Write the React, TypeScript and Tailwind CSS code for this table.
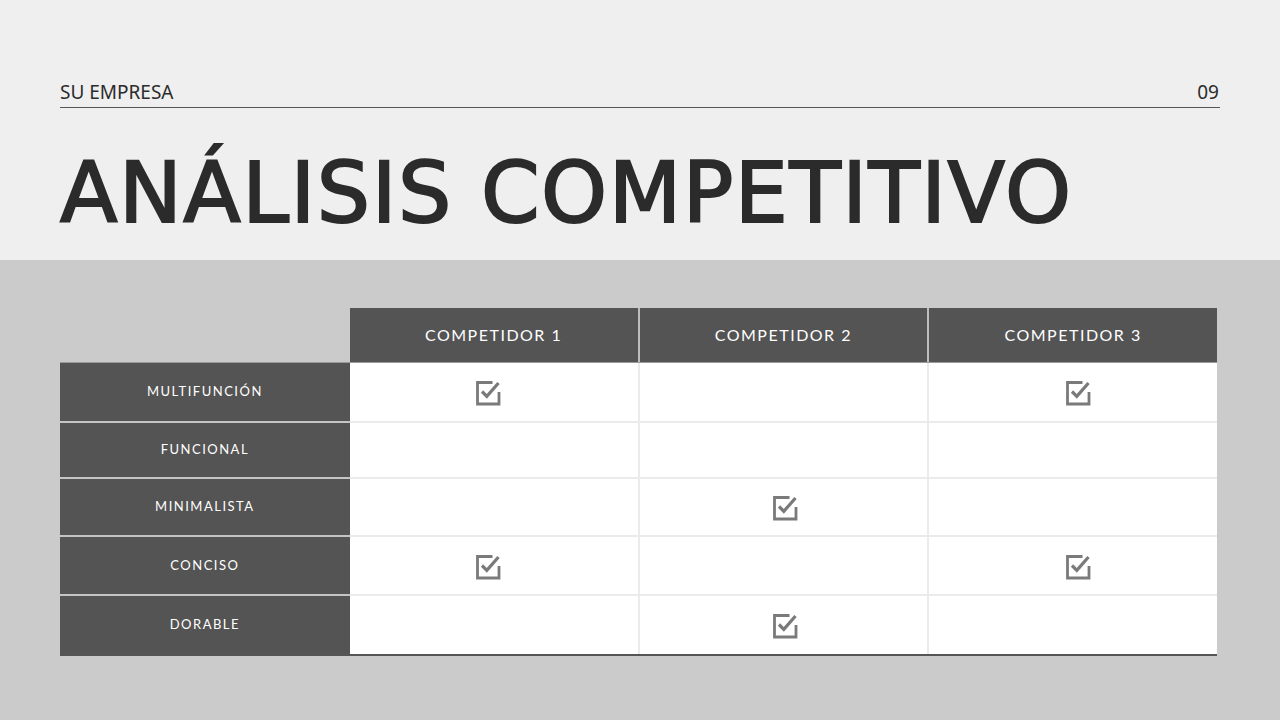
const columns = ['COMPETIDOR 1', 'COMPETIDOR 2', 'COMPETIDOR 3'];

const rows = [
  { label: 'MULTIFUNCIÓN', checks: [true, false, true], h: 'h-[58px]' },
  { label: 'FUNCIONAL', checks: [false, false, false], h: 'h-[56px]' },
  { label: 'MINIMALISTA', checks: [false, true, false], h: 'h-[58px]' },
  { label: 'CONCISO', checks: [true, false, true], h: 'h-[59px]' },
  { label: 'DORABLE', checks: [false, true, false], h: 'h-[60px]' },
];

// small nudges so the ticks sit where the slide has them
const nudge = ['pr-[12px]', 'pl-[4px]', 'pl-[10px]'];

function CheckIcon() {
  return (
    <svg width="28" height="28" viewBox="0 0 28 28" fill="none">
      <path d="M18.5 4.5H3.5V26H25V14" stroke="#7a7a7a" strokeWidth="2.8" />
      <path d="M8 13.5L12.8 18.3L24.5 5" stroke="#7a7a7a" strokeWidth="3.2" />
    </svg>
  );
}

export default function App() {
  return (
    <div className="w-[1280px] h-[720px] flex flex-col" style={{ fontFamily: '"DejaVu Sans", sans-serif' }}>
      {/* Top band */}
      <div className="h-[260px] bg-[#efefef] px-[60px] pt-[80px]">
        <div className="flex items-end justify-between border-b border-[#555] pb-[3px] text-[19px] leading-[24px] text-[#2b2b2b]" style={{ fontFamily: '"Noto Sans", sans-serif' }}>
          <span>SU EMPRESA</span>
          <span className="mr-[1px]">09</span>
        </div>
        <h1 className="mt-[39px] text-[84px] leading-[92px] text-[#2b2b2b] tracking-[1.5px] [-webkit-text-stroke:2px_#2b2b2b]">
          ANÁLISIS COMPETITIVO
        </h1>
      </div>

      {/* Table area */}
      <div className="flex-1 bg-[#cbcbcb] px-[60px] pt-[48px]">
        <div className="w-[1157px]">
          {/* Header row */}
          <div className="flex h-[54px]">
            <div className="w-[290px]" />
            {columns.map((c, i) => (
              <div
                key={c}
                className={`flex items-center justify-center bg-[#545454] text-white text-[16px] tracking-[1.5px] ${
                  i === 2 ? 'w-[288px]' : 'w-[290px] border-r-2 border-[#bdbdbd]'
                }`}
                style={{ fontFamily: 'Lato, sans-serif' }}
              >
                {c}
              </div>
            ))}
          </div>
          <div className="h-[1px] bg-[#9a9a9a]" />

          {/* Body rows */}
          <div className="border-b-2 border-[#555]">
            {rows.map((r, ri) => (
              <div key={r.label} className={`flex ${r.h} ${ri > 0 ? 'border-t-2 border-[#c4c4c4]' : ''}`}>
                <div
                  className="w-[290px] flex items-center justify-center bg-[#545454] text-white text-[13px] tracking-[1.5px]"
                  style={{ fontFamily: 'Lato, sans-serif' }}
                >
                  {r.label}
                </div>
                {r.checks.map((on, ci) => (
                  <div
                    key={ci}
                    className={`flex items-center justify-center bg-white ${nudge[ci]} ${
                      ri > 0 ? '-mt-[2px] border-t-2 border-[#ebebeb]' : ''
                    } ${ci === 2 ? 'w-[288px]' : 'w-[290px] border-r-2 border-[#ebebeb]'}`}
                  >
                    {on && <CheckIcon />}
                  </div>
                ))}
              </div>
            ))}
          </div>
        </div>
      </div>
    </div>
  );
}
